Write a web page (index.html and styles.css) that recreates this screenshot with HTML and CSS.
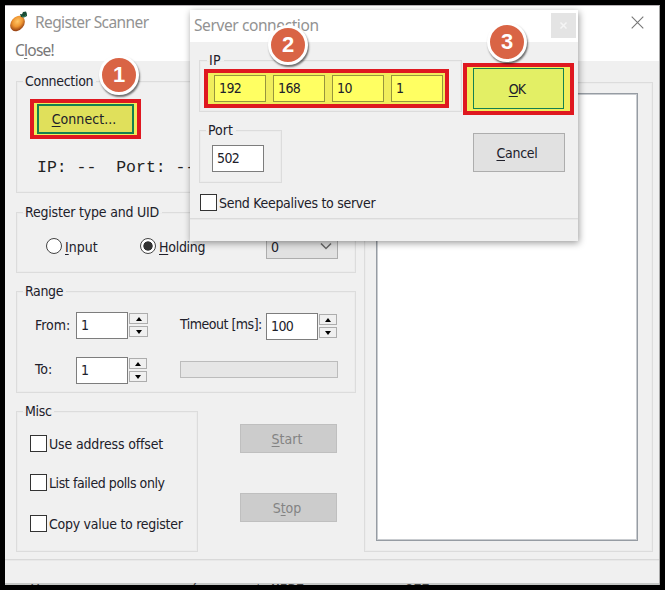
FILE: index.html
```html
<!DOCTYPE html>
<html lang="en">
<head>
<meta charset="utf-8">
<title>Register Scanner</title>
<link rel="stylesheet" href="styles.css">
</head>
<body>
<div class="window">
  <header class="titlebar">
    <svg class="appicon" width="18" height="21" viewBox="0 0 18 21">
      <defs><radialGradient id="fruit" cx=".4" cy=".4" r=".6"><stop offset="0" stop-color="#ffc768"/><stop offset=".55" stop-color="#ef9632"/><stop offset="1" stop-color="#9b4514"/></radialGradient></defs>
      <ellipse cx="7.500" cy="12.500" rx="6.500" ry="8.500" transform="rotate(39 7.500 12.500)" fill="url(#fruit)"/>
      <path d="M10 3l2 .2L13 1l3-.5.8 2L17 5l-3 1.500-3-.5z" fill="#174b34"/>
      <path d="M12 5l2 1 2-2" stroke="#327b55" fill="none"/>
    </svg>
    <span class="caption">Register Scanner</span>
    <svg class="winclose" width="13" height="13" viewBox="0 0 13 13"><path d="M.7.7l11.600 11.600M12.300.7L.7 12.300" stroke="#777" stroke-width="1.100"/></svg>
  </header>
  <nav class="menubar"><span>C<u>l</u>ose!</span></nav>

  <main class="content">
    <div class="left">
      <fieldset class="connection">
        <legend class="l-conn">Connection</legend>
        <div class="mark mark-connect"><button class="btn hot connect"><u>C</u>onnect...</button></div>
        <pre class="status">IP: --  Port: --</pre>
      </fieldset>

      <fieldset class="register">
        <legend class="l-reg">Register type and UID</legend>
        <div class="options">
          <span class="radio"></span><span class="opt-input"><u>I</u>nput</span>
          <span class="radio on"></span><span class="opt-holding"><u>H</u>olding</span>
          <div class="select"><span>0</span><svg width="12" height="8" viewBox="0 0 12 8"><path d="M1 1.500l5 5 5-5" fill="none" stroke="#666" stroke-width="1.500"/></svg></div>
        </div>
      </fieldset>

      <fieldset class="range">
        <legend>Range</legend>
        <div class="row row-from">
          <span class="lab">From:</span><div class="field">1</div>
          <div class="spin wide"><i class="up"></i><i class="down"></i></div>
          <span class="timeout">Timeout [ms]:</span><div class="field low">100</div>
          <div class="spin low"><i class="up"></i><i class="down"></i></div>
        </div>
        <div class="row row-to">
          <span class="lab">To:</span><div class="field">1</div>
          <div class="spin"><i class="up"></i><i class="down"></i></div>
          <div class="progress"></div>
        </div>
      </fieldset>

      <div class="bottom">
        <fieldset class="misc">
          <legend>Misc</legend>
          <label class="check"><i class="box"></i><span class="t-use">Use address offset</span></label>
          <label class="check c2"><i class="box"></i><span class="t-list">List failed polls only</span></label>
          <label class="check c3"><i class="box"></i><span class="t-copy">Copy value to register</span></label>
        </fieldset>
        <div class="actions">
          <button class="btn off"><u>S</u>tart</button>
          <button class="btn off">S<u>t</u>op</button>
        </div>
      </div>
    </div>
    <div class="results"><div class="list"></div></div>
  </main>
  <footer class="statusbar"></footer>
  <div class="behind"><span>Y</span><span>(ncorrect MIBF</span><span>OFF</span></div>
</div>

<section class="dialog">
  <header class="dialog-title"><span class="caption">Server connection</span><span class="dclose"><svg width="7" height="7" viewBox="0 0 7 7"><path d="M.5.5l6 6m0-6l-6 6" stroke="#f5f5f5" stroke-width="1.500"/></svg></span></header>
  <div class="dialog-body">
    <div class="dialog-left">
      <fieldset class="ip">
        <legend>IP</legend>
        <div class="mark mark-ip"><div class="field">192</div><div class="field">168</div><div class="field">10</div><div class="field">1</div></div>
      </fieldset>
      <fieldset class="port">
        <legend>Port</legend>
        <div class="field">502</div>
      </fieldset>
      <label class="check keep"><i class="box"></i><span class="t-keep">Send Keepalives to server</span></label>
    </div>
    <div class="dialog-right">
      <div class="mark mark-ok"><button class="btn hot ok"><u>O</u>K</button></div>
      <button class="btn cancel"><u>C</u>ancel</button>
    </div>
  </div>
  <footer class="dialog-status"></footer>
</section>

<span class="badge b1">1</span>
<span class="badge b2">2</span>
<span class="badge b3">3</span>
</body>
</html>
```
FILE: styles.css
```css
* { box-sizing: border-box; }
body {
  margin: 0; width: 665px; height: 590px; padding: 5px; overflow: hidden;
  position: relative; background: #000; color: #20202a;
  font: 14px/18px "DejaVu Sans Condensed", "DejaVu Sans", sans-serif;
  font-stretch: condensed; letter-spacing: -.27px;
}
u { text-decoration: underline; text-decoration-thickness: 1px; text-underline-offset: 2px; }
i { font-style: normal; }
span, label { white-space: nowrap; }
.window { width: 655px; height: 580px; background: #f0f0f0; border-top: 1px solid #b9b4b8; border-right: 1px solid #aaa; overflow: hidden; }
.titlebar { display: flex; height: 33px; background: #fff; padding: 5px 15px 0 5px; }
.appicon { margin-right: 7px; flex: none; }
.caption { font: 15.500px/22px "Noto Sans", sans-serif; letter-spacing: -.6px; color: #929292; }
.winclose { margin: 5px 0 0 auto; }
.menubar { height: 22px; background: #fff; padding-left: 10px; font: 15.500px/22px "Noto Sans", sans-serif; letter-spacing: -.75px; color: #777; }
.content { display: flex; height: 498px; padding: 11px 0 0 11px; }
.left { width: 340px; }
fieldset { margin: 0; padding: 0; min-width: 0; border: 1px solid #dcdcdc; box-shadow: inset 0 0 0 1px #ececec; }
legend { height: 18px; margin-left: 6px; padding: 0 3px 0 2px; line-height: 19px; letter-spacing: -.35px; }
.l-conn { letter-spacing: -.3px; }
.l-reg { letter-spacing: -.2px; }
.connection { height: 121px; }
.register { height: 70px; margin-top: 10px; }
.range { height: 111px; margin-top: 9px; }
.mark { border: 4px solid #df1820; background: #f0ed5c; display: flex; }
.mark-connect { width: 111px; height: 40px; margin: 9px 0 0 13px; padding: 1px 3px; }
.btn { display: block; font: inherit; letter-spacing: inherit; color: #20202a; background: #e1e1e1; border: 1px solid #adadad; padding: 0; border-radius: 0; text-align: center; }
.hot { border-color: #148050; }
.connect { width: 97px; height: 30px; border-width: 2px; background: #e0e05b; letter-spacing: .05px; padding-right: 3px; }
.status { margin: 17px 0 0 20px; font: 16.500px/24px "Liberation Mono", monospace; letter-spacing: 0; color: #222; }
.options { display: flex; padding: 17px 0 0 29px; height: 45px; }
.radio { flex: none; width: 16px; height: 16px; border: 1.500px solid #444; border-radius: 50%; background: #fff; margin-right: 3px; }
.radio.on { background: radial-gradient(circle, #333 0 4.300px, #fff 5px); }
.opt-input { width: 75px; letter-spacing: 0; }
.opt-holding { width: 107px; }
.select { width: 72px; height: 27px; margin-top: -6px; border: 1px solid #adadad; background: #e1e1e1; display: flex; justify-content: space-between; padding: 5px 5px 0 4px; }
.select svg { margin-top: 4px; }
.row { display: flex; padding-left: 18px; }
.row-from { margin-top: 12px; }
.row-to { margin-top: 17px; }
.lab { width: 41px; margin-top: 4px; letter-spacing: 0; }
.row-to .lab { margin-top: 3px; }
.field { width: 52px; height: 27px; border: 1.500px solid #7d7d7d; background: #fff; line-height: 24px; padding-left: 4px; flex: none; letter-spacing: -.6px; }
.low { margin-top: 1px; }
.spin { width: 18px; height: 25px; margin-left: 1px; padding-top: 1px; display: grid; gap: 2px; flex: none; }
.spin i { border: 1px solid #adadad; background: #f0f0f0; display: grid; place-items: center; }
.spin i::before { content: ""; border: 3px solid transparent; }
.spin .up::before { border-top: 0; border-bottom: 4px solid #000; }
.spin .down::before { border-bottom: 0; border-top: 4px solid #000; }
.timeout { width: 86px; margin: 3px 0 0 33px; letter-spacing: -.5px; }
.wide { width: 19px; margin-right: -1px; }
.progress { width: 158px; height: 17px; margin: 4px 0 0 33px; border: 1px solid #bcbcbc; background: #e6e6e6; }
.bottom { display: flex; margin-top: 9px; }
.misc { width: 182px; height: 150px; }
.check { display: flex; height: 17px; margin: 15px 0 0 13px; }
.check.c2 { margin-top: 22px; }
.check.c3 { margin-top: 24px; }
.t-use { letter-spacing: -.15px; }
.t-list { letter-spacing: -.42px; }
.box { width: 17px; height: 17px; flex: none; border: 1.500px solid #333; background: #fff; margin-right: 2px; }
.actions { padding: 22px 0 0 42px; }
.off { width: 97px; height: 29px; background: #ccc; border-color: #bfbfbf; color: #838383; padding-right: 3px; letter-spacing: 0; }
.off + .off { margin-top: 40px; }
.results { width: 289px; height: 470px; margin: 10px 0 0 8px; border: 1px solid #dcdcdc; padding: 10px 0 0 11px; box-shadow: inset 0 0 0 1px #ececec; }
.list { width: 262px; height: 448px; background: #fff; border: 1px solid #969ca3; box-shadow: inset 0 0 0 1px #c9ccd0; }
.statusbar { height: 24px; border-top: 1px solid #d9d9d9; box-shadow: inset 0 1px #e8e8e8; }
.behind { display: grid; grid-template-columns: 159px 215px 1fr; height: 2px; background: #c5c7c6; font: 14px/14px "Liberation Mono", monospace; padding-left: 26px; overflow: hidden; color: #444; }
.dialog { position: absolute; left: 190px; top: 10px; width: 388px; height: 231px; background: #f0f0f0; box-shadow: 1px 2px 7px rgba(0,0,0,.4); }
.dialog-title { height: 32px; display: flex; justify-content: space-between; background: #fff; padding: 3px 2px 0 4px; }
.dialog-title .caption { line-height: 24px; letter-spacing: -.4px; }
.dclose { width: 25px; height: 25px; display: grid; place-items: center; background: #e4e4e4; }
.dialog-body { display: flex; height: 176px; }
.dialog-left { width: 273px; padding: 9px 0 0 9px; }
.ip { width: 263px; height: 61px; }
.ip legend { margin-left: 7px; line-height: 18px; letter-spacing: .3px; }
.mark-ip { width: 245px; height: 39px; margin-left: 4px; padding: 2px 0 0 6px; gap: 7px; }
.mark-ip .field { border-color: #97943d; background: #ffff62; }
.port { width: 83px; height: 62px; margin-top: 9px; }
.port legend { margin-left: 6px; letter-spacing: 0; }
.port .field { margin: 6px 0 0 12px; }
.keep { margin: 11px 0 0 1px; }
.t-keep { letter-spacing: -.3px; }
.dialog-right { padding-top: 21px; }
.mark-ok { width: 111px; height: 52px; padding: 1px 6px; }
.ok { width: 92px; height: 41px; background: #e3ef65; letter-spacing: -.8px; padding-right: 3px; }
.cancel { width: 92px; height: 39px; margin: 18px 0 0 10px; padding-right: 4px; }
.dialog-status { height: 23px; border-top: 1px solid #dbdbdb; box-shadow: inset 0 1px #e8e8e8; }
.badge { position: absolute; width: 40px; height: 40px; border: 3px solid #fff; border-radius: 50%; background: #d96445; color: #fff; box-shadow: 1px 2px 2px rgba(0,0,0,.55); font: bold 22px/33px "Liberation Sans", sans-serif; letter-spacing: 0; text-align: center; }
.b1 { left: 99px; top: 55px; }
.b2 { left: 268px; top: 25px; }
.b3 { left: 487px; top: 22px; }
```
